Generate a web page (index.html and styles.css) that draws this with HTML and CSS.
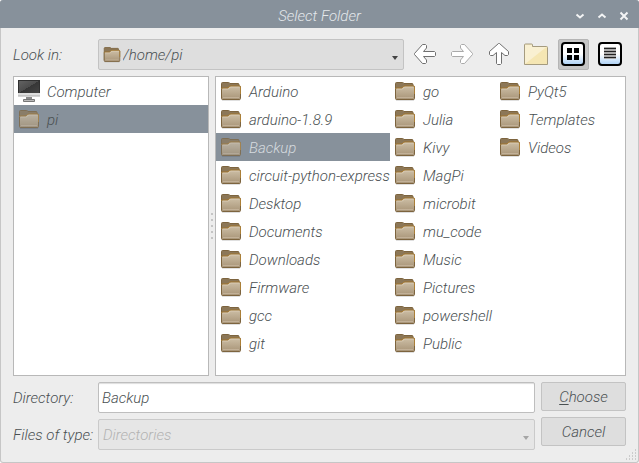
FILE: index.html
```html
<!DOCTYPE html>
<html lang="en">
<head>
<meta charset="utf-8">
<title>Select Folder</title>
<link rel="stylesheet" href="styles.css">
</head>
<body>
<svg class="defs" aria-hidden="true">
  <defs>
    <linearGradient id="tan" x1="0" y1="0" x2="0" y2="1"><stop offset="0" stop-color="#cdbfa6"/><stop offset="1" stop-color="#a89477"/></linearGradient>
    <linearGradient id="screen" x1="0" y1="0" x2="1" y2="1"><stop offset="0" stop-color="#626262"/><stop offset=".5" stop-color="#4c4c4c"/><stop offset=".5" stop-color="#363636"/><stop offset="1" stop-color="#444"/></linearGradient>
    <linearGradient id="blue" x1="0" y1="0" x2="0" y2="1"><stop offset=".5" stop-color="#fff"/><stop offset="1" stop-color="#a9cff5"/></linearGradient>
    <symbol id="folder" viewBox="0 0 22 20">
      <path d="M2 18.500h18" stroke="#000" stroke-opacity=".25" stroke-width="2"/>
      <path d="M1.500 17V2.500q0-1 1-1h6q1 0 1.500 1H18q1 0 1 1V10" fill="#8c7757" stroke="#7d643e"/>
      <path d="M1.500 17.500V8q0-1 1-1H8l2-2h9.500q1 0 1 1v11.500q0 1-1 1h-17q-1 0-1-1z" fill="url(#tan)" stroke="#7d643e"/>
      <path d="M1.500 8q0-1 1-1H8l2-2h9.500q1 0 1 1v7" fill="none" stroke="#ab7f37"/>
      <path d="M2.500 8h6l2-2h9" fill="none" stroke="#e0d3bd" stroke-opacity=".7"/>
      <path d="M3 16.500h16" stroke="#d5c6b0" stroke-opacity=".5"/>
    </symbol>
    <symbol id="arrow" viewBox="0 0 24 24">
      <path d="M1.500 11.500v1L9.500 21.500H12.500l1-1v-2.500L10.500 14.500H21.500l1-1V10.500l-1-1H10.500L13.500 6V3.500L12.500 2.500H9.500z"/>
    </symbol>
  </defs>
</svg>
<div class="window">
  <header class="titlebar">
    <h1>Select Folder</h1>
    <div class="controls">
      <button aria-label="Minimize"><svg viewBox="0 0 10 10"><path d="M1.500 3.500L5 6.500l3.500-3"/></svg></button>
      <button aria-label="Maximize"><svg viewBox="0 0 10 10"><path d="M1.500 6.500L5 3.500l3.500 3"/></svg></button>
      <button aria-label="Close"><svg viewBox="0 0 10 10"><path d="M1.500 1.500l7 7M8.500 1.500l-7 7"/></svg></button>
    </div>
  </header>
  <main>
    <div class="toolbar">
      <label for="look">Look in:</label>
      <div class="combo location">
        <svg class="combo-icon" viewBox="0 0 22 20" aria-hidden="true"><use href="#folder"/></svg>
        <select id="look"><option>/home/pi</option></select>
      </div>
      <button class="tool" aria-label="Back"><svg class="arrow"><use href="#arrow"/></svg></button>
      <button class="tool" aria-label="Forward" disabled><svg class="arrow forward"><use href="#arrow"/></svg></button>
      <button class="tool" aria-label="Parent directory"><svg class="arrow up"><use href="#arrow"/></svg></button>
      <button class="tool" aria-label="Create new folder"><svg viewBox="0 0 24 24"><path d="M.5 22.500V3q0-1 1-1h6q1 0 1 1v1.500h14q1 0 1 1v17z" fill="#f5e6b3"/><path d="M1 22V2.500h7v2h15z" fill="#f9f0d2"/><path d="M.5 22.500V3q0-1 1-1h6q1 0 1 1v1.500h14q1 0 1 1v17z" fill="none" stroke="#a59b7f"/></svg></button>
      <button class="tool active" aria-label="List view" aria-pressed="true"><svg viewBox="0 0 24 24"><rect x="1" y="1" width="22" height="22" rx="3" fill="url(#blue)" stroke="#000" stroke-width="2"/><path d="M6 6h5v5H6zM13 6h5v5h-5zM6 13h5v5H6zM13 13h5v5h-5z"/></svg></button>
      <button class="tool" aria-label="Detail view"><svg viewBox="0 0 24 24"><rect x="1" y="1" width="22" height="22" rx="3" fill="url(#blue)" stroke="#000" stroke-width="2"/><path d="M6 5h12v12H6z" fill="#aaa"/><path d="M6 6.500h12M6 9.500h12M6 12.500h12M6 15.500h12" stroke="#222"/></svg></button>
    </div>
    <div class="panes">
      <ul class="pane places">
        <li><svg class="computer" viewBox="0 0 24 24"><path d="M1 1h22v14H1z" fill="#303030"/><path d="M2 2h20v12H2z" fill="url(#screen)"/><path d="M1 14h22v3H1z" fill="#ddd"/><path d="M1 17h22" stroke="#aaa"/><path d="M9 18h6v3H9z" fill="#8a8a8a"/><path d="M6.500 20.500h11v2h-11z" fill="#bbb" stroke="#777"/></svg>Computer</li>
        <li class="selected"><svg><use href="#folder"/></svg>pi</li>
      </ul>
      <div class="splitter"></div>
      <ul class="pane files">
        <li><svg><use href="#folder"/></svg>Arduino</li>
        <li><svg><use href="#folder"/></svg>arduino-1.8.9</li>
        <li class="selected"><svg><use href="#folder"/></svg>Backup</li>
        <li><svg><use href="#folder"/></svg>circuit-python-express</li>
        <li><svg><use href="#folder"/></svg>Desktop</li>
        <li><svg><use href="#folder"/></svg>Documents</li>
        <li><svg><use href="#folder"/></svg>Downloads</li>
        <li><svg><use href="#folder"/></svg>Firmware</li>
        <li><svg><use href="#folder"/></svg>gcc</li>
        <li><svg><use href="#folder"/></svg>git</li>
        <li><svg><use href="#folder"/></svg>go</li>
        <li><svg><use href="#folder"/></svg>Julia</li>
        <li><svg><use href="#folder"/></svg>Kivy</li>
        <li><svg><use href="#folder"/></svg>MagPi</li>
        <li><svg><use href="#folder"/></svg>microbit</li>
        <li><svg><use href="#folder"/></svg>mu_code</li>
        <li><svg><use href="#folder"/></svg>Music</li>
        <li><svg><use href="#folder"/></svg>Pictures</li>
        <li><svg><use href="#folder"/></svg>powershell</li>
        <li><svg><use href="#folder"/></svg>Public</li>
        <li><svg><use href="#folder"/></svg>PyQt5</li>
        <li><svg><use href="#folder"/></svg>Templates</li>
        <li><svg><use href="#folder"/></svg>Videos</li>
      </ul>
    </div>
    <form class="form">
      <div class="fields">
        <label for="dir">Directory:</label>
        <input id="dir" type="text" value="Backup">
        <label for="type">Files of type:</label>
        <div class="combo disabled"><select id="type" disabled><option>Directories</option></select></div>
      </div>
      <div class="actions">
        <button type="button"><u>C</u>hoose</button>
        <button type="button">Cancel</button>
      </div>
    </form>
  </main>
  <svg class="grip" viewBox="0 0 12 12" aria-hidden="true"><path d="M10 1h1M7 4h1m2 0h1M4 7h1m2 0h1m2 0h1M1 10h1m2 0h1m2 0h1m2 0h1"/></svg>
</div>
</body>
</html>
```
FILE: styles.css
```css
* { box-sizing: border-box; }
body {
  margin: 0;
  background: #fff;
  color: #4a5052;
  font: italic 300 15px/20px Roboto, sans-serif;
}
button, input, select { font: inherit; color: inherit; margin: 0; }
button { padding: 0; border: 0; background: none; }
ul { margin: 0; padding: 0; list-style: none; }
.defs { position: absolute; width: 0; height: 0; }

.window {
  position: relative;
  display: flex;
  flex-direction: column;
  min-height: 100vh;
  background: #ededed;
  border: 1px solid #c6c6c6;
  border-top: 0;
  border-radius: 3px;
}
.titlebar {
  display: grid;
  grid-template-columns: 1fr auto 1fr;
  align-items: center;
  height: 28px;
  margin: 0 -1px;
  padding: 4px 10px 0;
  background: #87919b;
  border-radius: 3px 3px 0 0;
  color: #e4e8eb;
}
.titlebar h1 { grid-column: 2; margin: 0; font: inherit; }
.controls { display: flex; justify-content: flex-end; gap: 12px; }
.controls button { width: 10px; height: 10px; }
.controls svg { display: block; width: 10px; height: 10px; fill: none; stroke: #f3f4f5; stroke-width: 2; }

main {
  flex: 1;
  display: flex;
  flex-direction: column;
  gap: 6px;
  padding: 11px 12px 12px;
}
.toolbar { display: flex; align-items: center; gap: 6px; }
.toolbar label { width: 79px; }
.combo { position: relative; height: 31px; }
.location { flex: 1; }
.combo select {
  appearance: none;
  width: 100%;
  height: 100%;
  padding: 0 20px 0 4px;
  border: 1px solid #c3c3c3;
  border-radius: 2px;
  background: #dedede;
  opacity: 1;
}
.combo.location select { padding-left: 24px; }
.combo.disabled select { background: #e6e6e6; border-color: #cacaca; color: #b3b3b3; }
.combo-icon { position: absolute; left: 5px; top: 7px; width: 18px; height: 17px; }
.combo::after {
  content: "";
  position: absolute;
  right: 6px;
  bottom: 10px;
  border: 3px solid transparent;
  border-top: 4px solid #444;
  border-bottom: 0;
}
.combo.disabled::after { border-top-color: #a5a5a5; }
.tool {
  display: grid;
  place-items: start;
  width: 31px;
  height: 31px;
  padding: 2px;
  border: 1px solid transparent;
  border-radius: 2px;
}
.tool.active { background: #c6c6c6; border-color: #b5b5b5; }
.tool svg { width: 24px; height: 24px; }
.arrow { fill: #fff; stroke: #707070; }
.forward { stroke: #aaa; transform: scaleX(-1); }
.up { transform: rotate(90deg); }

.panes { flex: 1; display: flex; }
.pane { min-height: 300px; border: 1px solid #b8b8b8; background: #fff; }
.places { width: 196px; }
.splitter {
  width: 6px;
  background: radial-gradient(circle, #c4c4c4 1px, transparent 1px) center / 6px 6px repeat-y;
  align-self: center;
  height: 26px;
}
.files {
  flex: 1;
  display: grid;
  grid-auto-flow: column;
  grid-template-rows: repeat(10, 28px);
  grid-template-columns: 174px 105px 1fr;
}
.pane li { display: flex; align-items: center; height: 28px; padding: 2px 0 0 4px; white-space: nowrap; }
.pane li svg { flex: none; width: 22px; height: 20px; margin: 0 7px 2px 0; }
.pane li .computer { width: 24px; height: 24px; margin: 0 6px 2px -1px; }
.selected { background: #87919b; }
.selected svg { opacity: .75; }
.files .selected { color: #d6dbdf; }

.form { display: flex; gap: 6px; }
.fields {
  flex: 1;
  display: grid;
  grid-template-columns: 79px 1fr;
  gap: 6px;
  align-items: center;
}
.fields label { white-space: nowrap; }
#dir {
  width: 100%;
  height: 31px;
  padding: 0 3px;
  border: 1px solid #bebebe;
  border-radius: 2px;
  background: #fff;
  box-shadow: inset 0 2px 1px -1px #ddd;
}
.actions { width: 85px; display: flex; flex-direction: column; gap: 6px; }
.actions button {
  height: 29px;
  border: 1px solid #c3c3c3;
  border-radius: 2px;
  background: #dedede;
}
.actions u { text-underline-offset: 2px; text-decoration-skip-ink: none; }
.grip { position: absolute; right: 1px; bottom: 1px; width: 12px; height: 12px; stroke: #aaa; }
```
